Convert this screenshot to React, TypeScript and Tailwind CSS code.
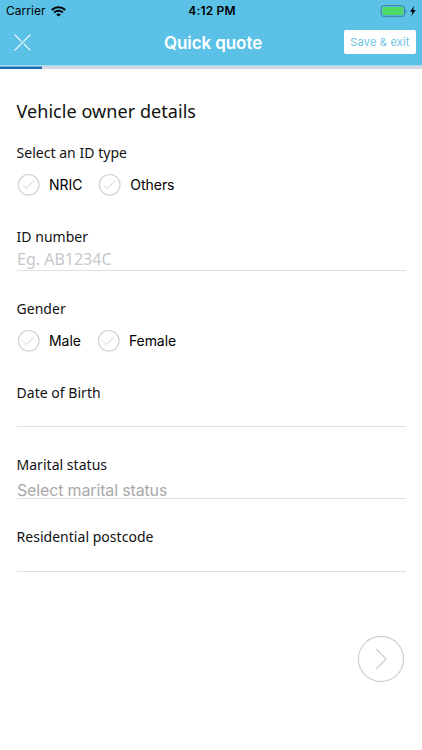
import React from 'react';

const noto = "font-['Noto_Sans',sans-serif]";
const inter = "font-['Inter',sans-serif]";

function StatusBar() {
  return (
    <div className="grid h-[22px] grid-cols-[1fr_auto_1fr] items-center pl-[6px] pr-[5px] text-black">
      <div className="flex items-center gap-[6px]">
        <span className="text-[12px] leading-[22px] tracking-[0.02px]">Carrier</span>
        <svg width="15" height="11" viewBox="0 0 15 11" fill="none" stroke="black" strokeWidth="2.1">
          <path d="M.8 3.9C4.5.4 10.5.4 14.2 3.9" />
          <path d="M3.2 6.4c2.4-2.2 6.2-2.2 8.6 0" />
          <path d="M7.5 10.6 5.2 8.4c1.3-1.2 3.3-1.2 4.6 0Z" fill="black" stroke="none" />
        </svg>
      </div>
      <span className="pl-[1px] text-[12px] font-semibold leading-[22px] tracking-[0.2px]">4:12 PM</span>
      <div className="flex items-center justify-end">
        <svg width="37" height="12" viewBox="0 0 37 12">
          <rect x="1.2" y=".7" width="23.4" height="10.6" rx="2.4" fill="none" stroke="#3d7f99" />
          <rect x="2.5" y="2" width="20.8" height="8" rx="1.2" fill="#4cd964" />
          <path d="M25.7 4.2c1.4.5 1.4 3.1 0 3.6Z" fill="#3d7f99" />
          <path d="M34.2.8 30 6.8h2.5l-1.3 4.4 4.6-6.1h-2.7Z" fill="black" />
        </svg>
      </div>
    </div>
  );
}

function Choice({ label }: { label: string }) {
  return (
    <label className="flex items-center gap-[9px]">
      <svg width="23" height="23" viewBox="0 0 23 23" fill="none" stroke="#d0d3d6">
        <circle cx="11.7" cy="11.8" r="10.3" strokeWidth="1.2" />
        <path d="m5.6 12.2 3.5 3.4 8.1-7.8" />
      </svg>
      <span className={`${inter} text-[14px] leading-[22px] tracking-[-0.05px] text-black`}>{label}</span>
    </label>
  );
}

function Label({ children }: { children: React.ReactNode }) {
  return <div className={`${noto} -ml-[0.5px] text-[14px] leading-5 tracking-[0.03px]`}>{children}</div>;
}

function Field({ children, className = 'h-[24px]' }: { children?: React.ReactNode; className?: string }) {
  return <div className={`w-[389px] border-b border-[#e0e0e2] ${className}`}>{children}</div>;
}

export default function App() {
  return (
    <div className={`${inter} h-[750px] w-[422px] overflow-hidden bg-white text-[#111]`}>
      <header className="h-[65px] bg-[#5bc1e7]">
        <StatusBar />
        <div className="grid h-[40px] grid-cols-[1fr_auto_1fr] items-center pl-[14px] pr-[6px]">
          <svg width="17" height="17" viewBox="0 0 17 17" stroke="white" strokeWidth="1.1">
            <path d="m.7.7 6.6 6.6M9.8 9.8l6.5 6.5M16.3.7.7 16.3" />
          </svg>
          <h1 className="mr-[4px] pt-[2px] text-[17px] font-semibold leading-[38px] tracking-[-0.08px] text-white">Quick quote</h1>
          <button className="h-6 w-[72px] justify-self-end whitespace-nowrap rounded-[2px] bg-white text-[11px] leading-[23px] tracking-[0.2px] text-[#6cc3e4]">
            Save &amp; exit
          </button>
        </div>
      </header>
      <div className="h-[4px] border-t border-[#a5daf0] bg-[#d3d9e3]">
        <div className="h-[3px] w-[42px] border-t border-[#78b4da] bg-[#1c66ad]" />
      </div>

      <main className="pl-[17px]">
        <h2 className={`${noto} -ml-[0.5px] pt-[28px] text-[18px] leading-7 tracking-[0.06px]`}>Vehicle owner details</h2>
        <section className="mt-[18px] h-[84px]">
          <Label>Select an ID type</Label>
          <div className="mt-[10px] flex gap-4">
            <Choice label="NRIC" />
            <Choice label="Others" />
          </div>
        </section>
        <section className="h-[72px]">
          <Label>ID number</Label>
          <Field>
            <span className={`${noto} block text-[16px] leading-[25px] text-[#c5c8ce]`}>Eg. AB1234C</span>
          </Field>
        </section>
        <section className="h-[84px]">
          <Label>Gender</Label>
          <div className="mt-[10px] flex gap-4">
            <Choice label="Male" />
            <Choice label="Female" />
          </div>
        </section>
        <section className="h-[72px]">
          <Label>Date of Birth</Label>
          <Field />
        </section>
        <section className="h-[72px]">
          <Label>Marital status</Label>
          <Field>
            <span className="block pt-[2px] text-[16px] leading-[26px] tracking-[-0.15px] text-[#a9a9a9]">Select marital status</span>
          </Field>
        </section>
        <section className="h-[72px]">
          <Label>Residential postcode</Label>
          <Field className="h-[25px]" />
        </section>
        <div className="mt-[36px] flex justify-end pr-[17px]">
          <button aria-label="Next">
            <svg width="48" height="48" viewBox="0 0 48 48" fill="none" stroke="#cbced2">
              <circle cx="24" cy="24" r="22.6" strokeWidth="1.1" />
              <path d="m19.2 14 10 10-10 10" strokeWidth="1.1" />
            </svg>
          </button>
        </div>
      </main>
    </div>
  );
}
